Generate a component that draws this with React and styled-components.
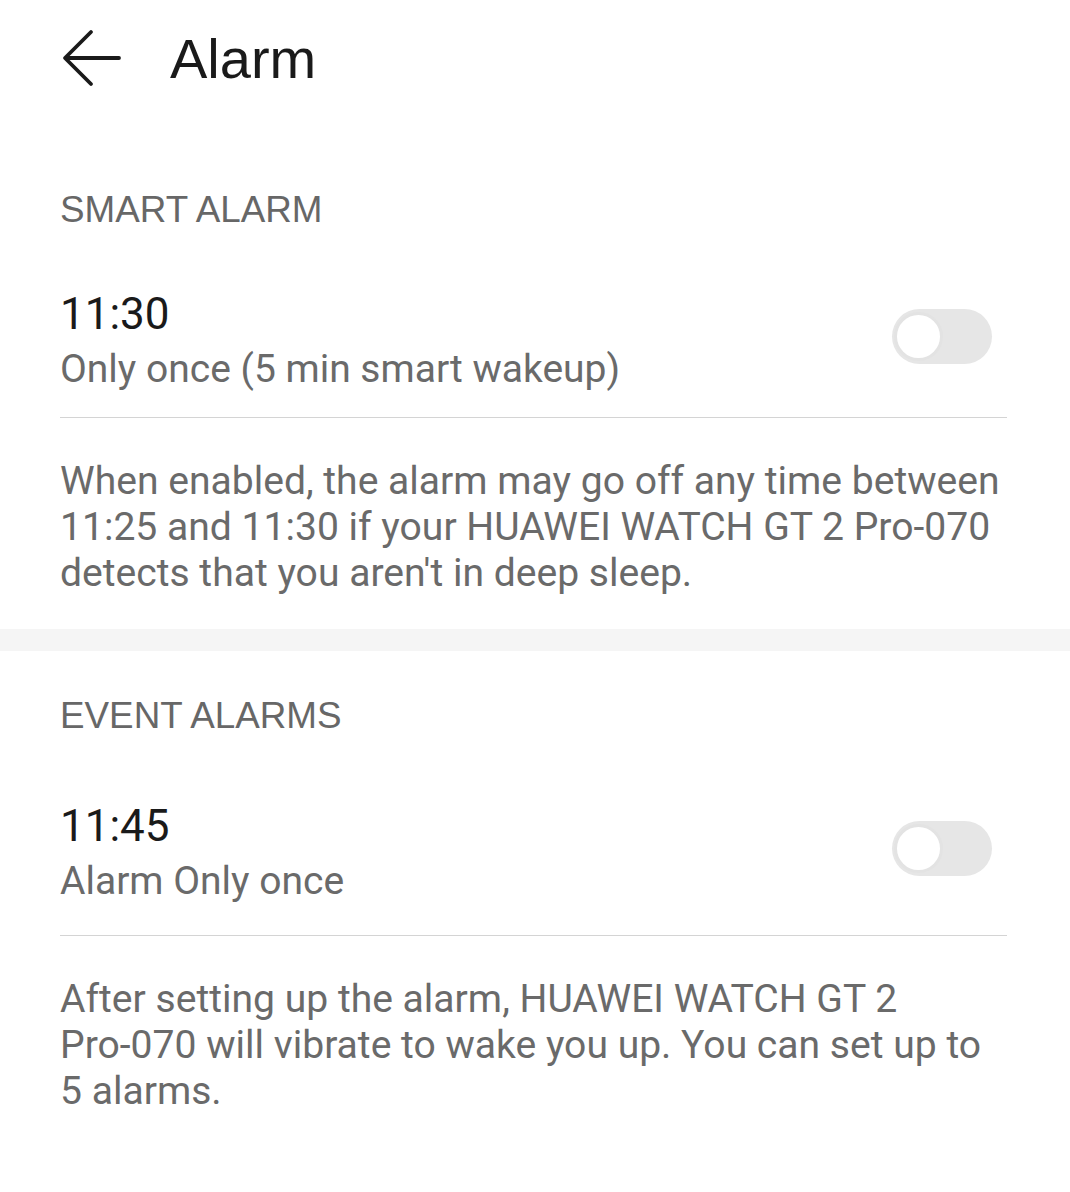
import React from "react";
import styled, { createGlobalStyle } from "styled-components";

const Global = createGlobalStyle`
  html, body { margin: 0; padding: 0; background: #fff; }
  body { font-family: Roboto, "Liberation Sans", sans-serif; -webkit-font-smoothing: antialiased; }
  * { box-sizing: border-box; }
`;

const Page = styled.div`
  width: 1070px;
  min-height: 1192px;
  background: #fff;
  display: flex;
  flex-direction: column;
`;

const Header = styled.header`
  display: flex;
  align-items: center;
  height: 116px;
  padding: 0 0 0 62px;
  gap: 44px;
`;

const BackButton = styled.button`
  border: 0;
  background: none;
  padding: 0;
  width: 64px;
  height: 60px;
  display: flex;
  align-items: center;
  justify-content: flex-start;
  color: #1a1a1a;
`;

const Title = styled.h1`
  margin: 0;
  font-family: "Liberation Sans", Arial, sans-serif;
  font-weight: 400;
  font-size: 56px;
  color: #1a1a1a;
  letter-spacing: 0;
`;

const Section = styled.section`
  padding: ${(p) => p.$top}px 63px 0 60px;
  display: flex;
  flex-direction: column;
`;

const SectionLabel = styled.div`
  font-family: "Liberation Sans", Arial, sans-serif;
  font-size: 36.8px;
  color: #676767;
  line-height: 42px;
`;

const Row = styled.div`
  display: flex;
  align-items: center;
  justify-content: space-between;
  padding: ${(p) => p.$top}px 0 ${(p) => p.$bottom}px;
  border-bottom: 1.5px solid #d4d4d4;
`;

const RowText = styled.div`
  display: flex;
  flex-direction: column;
`;

const Time = styled.div`
  font-size: 44px;
  line-height: 54px;
  color: #1a1a1a;
`;

const Sub = styled.div`
  font-size: 39px;
  line-height: 56px;
  color: #6a6a6a;
`;

const Track = styled.div`
  width: 100px;
  height: 55px;
  border-radius: 28px;
  background: #e6e6e6;
  position: relative;
  margin: 0 15px 12px 0;
`;

const Knob = styled.div`
  position: absolute;
  left: 2px;
  top: 3px;
  width: 49px;
  height: 49px;
  border-radius: 50%;
  background: #fff;
  border: 3px solid #e3e3e3;
`;

const Description = styled.p`
  margin: 0;
  padding: ${(p) => p.$top}px 0 ${(p) => p.$bottom}px;
  font-size: 39.1px;
  line-height: 46px;
  color: #6a6a6a;
`;

const NoWrap = styled.span`
  white-space: nowrap;
`;

const Divider = styled.div`
  height: 22px;
  background: #f5f5f5;
`;

function Toggle() {
  return (
    <Track>
      <Knob />
    </Track>
  );
}

function BackIcon() {
  return (
    <svg width="60" height="58" viewBox="0 0 60 58" fill="none">
      <path
        d="M57 29H5M29 3L3 29l26 26"
        stroke="#1a1a1a"
        strokeWidth="3.8"
        strokeLinecap="round"
        strokeLinejoin="round"
      />
    </svg>
  );
}

export default function App() {
  return (
    <>
      <Global />
      <Page>
        <Header>
          <BackButton aria-label="Back">
            <BackIcon />
          </BackButton>
          <Title>Alarm</Title>
        </Header>

        <Section $top={73}>
          <SectionLabel>SMART ALARM</SectionLabel>
          <Row $top={56} $bottom={20}>
            <RowText>
              <Time>11:30</Time>
              <Sub>Only once (5 min smart wakeup)</Sub>
            </RowText>
            <Toggle />
          </Row>
          <Description $top={40} $bottom={33}>
            When enabled, the alarm may go off any time between 11:25 and 11:30
            if your HUAWEI WATCH GT 2 Pro-070 detects that you aren't in deep
            sleep.
          </Description>
        </Section>

        <Divider />

        <Section $top={44}>
          <SectionLabel>EVENT ALARMS</SectionLabel>
          <Row $top={62} $bottom={26}>
            <RowText>
              <Time>11:45</Time>
              <Sub>Alarm Only once</Sub>
            </RowText>
            <Toggle />
          </Row>
          <Description $top={40} $bottom={40}>
            After setting up the alarm, HUAWEI WATCH GT 2{" "}
            <NoWrap>Pro-070</NoWrap> will vibrate to wake you up. You can set up
            to <NoWrap>5 alarms.</NoWrap>
          </Description>
        </Section>
      </Page>
    </>
  );
}
